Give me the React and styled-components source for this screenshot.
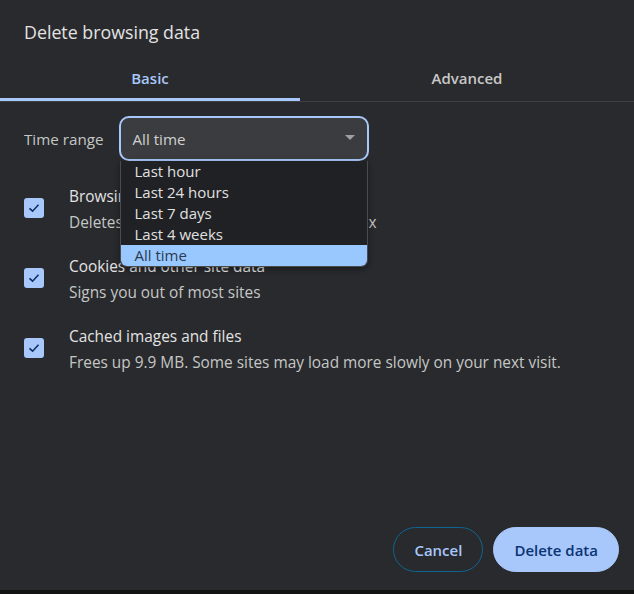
import React, { useState } from "react";
import styled, { createGlobalStyle } from "styled-components";

const GlobalStyle = createGlobalStyle`
  html, body {
    margin: 0;
    padding: 0;
    background: #1b1c1d;
  }
  body {
    font-family: "Open Sans", "Noto Sans", sans-serif;
    -webkit-font-smoothing: antialiased;
  }
`;

const Page = styled.div`
  width: 634px;
  height: 594px;
  display: flex;
  flex-direction: column;
  overflow: hidden;
`;

const Dialog = styled.div`
  height: 590px;
  background: #292a2d;
  display: flex;
  flex-direction: column;
  color: #e3e3e3;
`;

const Title = styled.h1`
  margin: 0;
  padding: 19px 24px 0;
  height: 33px;
  font-size: 17.8px;
  font-weight: 400;
  line-height: 26px;
  color: #e3e3e3;
`;

const Tabs = styled.div`
  display: flex;
  border-bottom: 1px solid #3f4044;
`;

const Tab = styled.button`
  flex: ${(p) => p.$grow};
  box-sizing: border-box;
  height: 49px;
  background: none;
  border: none;
  border-bottom: 3px solid ${(p) => (p.$active ? "#a8c7fa" : "transparent")};
  color: ${(p) => (p.$active ? "#a8c7fa" : "#c7c7c7")};
  font-family: inherit;
  font-size: 15px;
  font-weight: 600;
  padding: 6px 0 0;
  cursor: pointer;
`;

const Body = styled.div`
  flex: 1;
  display: flex;
  flex-direction: column;
  padding: 14px 24px 0;
`;

const RangeRow = styled.div`
  display: flex;
  align-items: center;
  gap: 16px;
  font-size: 15.2px;
  color: #c4c7c5;
`;

const SelectWrap = styled.div`
  position: relative;
  width: 250px;
`;

const SelectBox = styled.div`
  height: 41px;
  box-sizing: content-box;
  border: 2px solid #a8c7fa;
  border-radius: 10px;
  background: #3b3c3f;
  display: flex;
  align-items: center;
  justify-content: space-between;
  padding: 0 12px 0 11px;
  font-size: 15.2px;
  color: #d0d0d0;
`;

const Caret = styled.span`
  width: 0;
  height: 0;
  border-left: 5px solid transparent;
  border-right: 5px solid transparent;
  border-top: 5px solid #a0a0a0;
  margin-top: -3px;
`;

const Menu = styled.ul`
  position: absolute;
  top: 45px;
  left: 1px;
  width: 246px;
  margin: 0;
  padding: 0;
  list-style: none;
  background: #202124;
  border: 1px solid #4a4b4f;
  border-top: none;
  border-radius: 0 0 7px 7px;
  overflow: hidden;
  box-shadow: 0 2px 6px rgba(0, 0, 0, 0.4);
  z-index: 2;
`;

const MenuItem = styled.li`
  height: 21px;
  line-height: 21px;
  padding-left: 13px;
  font-size: 15px;
  color: ${(p) => (p.$selected ? "#2b3b52" : "#e0e0e0")};
  background: ${(p) => (p.$selected ? "#99c8ff" : "transparent")};
`;

const List = styled.div`
  display: flex;
  flex-direction: column;
  gap: 20px;
  margin-top: 22px;
`;

const Option = styled.label`
  display: flex;
  align-items: center;
  gap: 25px;
  height: 50px;
`;

const Box = styled.span`
  width: 20px;
  height: 20px;
  border-radius: 3px;
  background: #a8c7fa;
  display: flex;
  align-items: center;
  justify-content: center;
  flex-shrink: 0;
`;

const Texts = styled.div`
  display: flex;
  flex-direction: column;
  gap: 5px;
  margin-top: 2px;
`;

const OptTitle = styled.div`
  font-size: 15.4px;
  color: #e3e3e3;
  line-height: 21px;
`;

const OptSub = styled.div`
  font-size: 15.4px;
  color: #c4c7c5;
  line-height: 21px;
`;

const Footer = styled.div`
  display: flex;
  justify-content: flex-end;
  gap: 10px;
  padding: 0 15px 18px 0;
`;

const Button = styled.button`
  height: 45px;
  border-radius: 23px;
  padding: 0 20px;
  font-family: inherit;
  font-size: 15px;
  font-weight: 600;
  cursor: pointer;
  border: 1px solid ${(p) => (p.$primary ? "#a8c7fa" : "#0e6591")};
  background: ${(p) => (p.$primary ? "#a8c7fa" : "transparent")};
  color: ${(p) => (p.$primary ? "#0a3474" : "#a8c7fa")};
`;

const Strip = styled.div`
  height: 4px;
  background: #131314;
`;

const Check = () => (
  <svg width="14" height="14" viewBox="0 0 14 14">
    <path d="M2.5 7.3 L5.6 10.2 L11.5 3.8" fill="none" stroke="#0a2f6b" strokeWidth="1.6" />
  </svg>
);

const ranges = ["Last hour", "Last 24 hours", "Last 7 days", "Last 4 weeks", "All time"];

const options = [
  { title: "Browsing history", sub: "Deletes history, including in the search box" },
  { title: "Cookies and other site data", sub: "Signs you out of most sites" },
  {
    title: "Cached images and files",
    sub: "Frees up 9.9 MB. Some sites may load more slowly on your next visit.",
  },
];

export default function App() {
  const [tab, setTab] = useState("basic");
  const [range] = useState("All time");

  return (
    <Page>
      <GlobalStyle />
      <Dialog>
        <Title>Delete browsing data</Title>
        <Tabs>
          <Tab $grow="0 0 300px" $active={tab === "basic"} onClick={() => setTab("basic")}>
            Basic
          </Tab>
          <Tab $grow="1" $active={tab === "advanced"} onClick={() => setTab("advanced")}>
            Advanced
          </Tab>
        </Tabs>
        <Body>
          <RangeRow>
            Time range
            <SelectWrap>
              <SelectBox>
                {range}
                <Caret />
              </SelectBox>
              <Menu>
                {ranges.map((r) => (
                  <MenuItem key={r} $selected={r === range}>
                    {r}
                  </MenuItem>
                ))}
              </Menu>
            </SelectWrap>
          </RangeRow>
          <List>
            {options.map((o) => (
              <Option key={o.title}>
                <Box>
                  <Check />
                </Box>
                <Texts>
                  <OptTitle>{o.title}</OptTitle>
                  <OptSub>{o.sub}</OptSub>
                </Texts>
              </Option>
            ))}
          </List>
        </Body>
        <Footer>
          <Button>Cancel</Button>
          <Button $primary>Delete data</Button>
        </Footer>
      </Dialog>
      <Strip />
    </Page>
  );
}
